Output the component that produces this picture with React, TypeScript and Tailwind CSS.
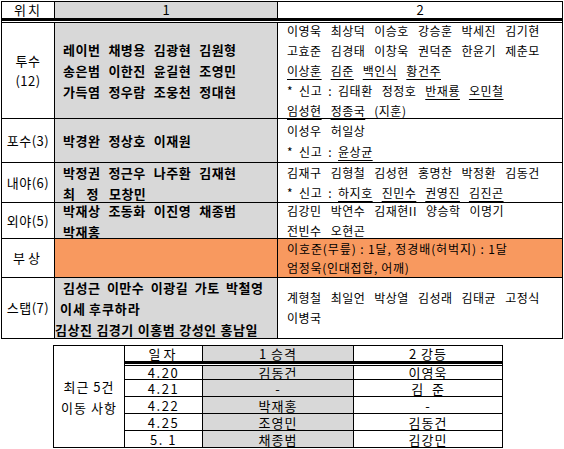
import React from "react";

const F = "font-['Noto_Sans_CJK_KR',sans-serif]";

type Wd = string | { t: string; u?: boolean; mr?: number };

function Row({ words, gap, cls = "", pl = 0 }: { words: Wd[]; gap: number; cls?: string; pl?: number }) {
  return (
    <div className={`flex whitespace-nowrap ${cls}`} style={{ paddingLeft: pl }}>
      {words.map((w, i) => {
        const o = typeof w === "string" ? { t: w } : w;
        const mr = i === words.length - 1 ? 0 : o.mr ?? gap;
        return (
          <span
            key={i}
            className={o.u ? "underline decoration-1 underline-offset-[3px]" : ""}
            style={{ marginRight: mr }}
          >
            {o.t}
          </span>
        );
      })}
    </div>
  );
}

const B2 = "text-[13px] font-bold leading-[21px] tracking-[0.5px]";
const T3 = "text-[12px] leading-[20px] tracking-[0.5px]";

function L2({ words, cls = "", gap = 8, pl = 0 }: { words: Wd[]; cls?: string; gap?: number; pl?: number }) {
  return <Row words={words} gap={gap} cls={`${B2} ${cls}`} pl={pl} />;
}
function L3({ words, cls = "", gap = 9 }: { words: Wd[]; cls?: string; gap?: number }) {
  return <Row words={words} gap={gap} cls={`${T3} ${cls}`} />;
}

const s = (str: string) => str.split(" ");
const u = (t: string): Wd => ({ t, u: true });
const SG: Wd[] = [{ t: "*", mr: 6 }, { t: "신고", mr: 6 }, { t: ":", mr: 6 }];

const c1 = "border-r border-b border-black flex flex-col items-center justify-center text-[13px] leading-[20px] tracking-[0.5px] whitespace-nowrap";
const c2 = "border-r border-b border-black bg-[#d8d8d8] flex flex-col justify-center pl-[8px]";
const c3 = "border-r border-b border-black flex flex-col justify-center pl-[9px]";

export default function App() {
  return (
    <div className={`w-[564px] h-[449px] bg-white text-black ${F}`}>
      <div className="pt-px pl-px">
        <div className="grid grid-cols-[53px_223px_285px] border-l border-t border-black w-[562px]">
          {/* header */}
          <div className="h-[19px] border-r border-b-[3px] border-black flex items-center justify-center text-[13px] leading-[14px] tracking-[2px]">위치</div>
          <div className="h-[19px] border-r border-b-[3px] border-black bg-[#d8d8d8] flex items-center justify-center text-[13px] leading-[14px]">1</div>
          <div className="h-[19px] border-r border-b-[3px] border-black flex items-center justify-center text-[13px] leading-[14px]">2</div>
          <div className="col-span-3 h-[2px] border-r border-b border-black bg-white" />

          {/* 투수 */}
          <div className={`${c1} h-[96px]`}>
            <div>투수</div>
            <div>(12)</div>
          </div>
          <div className={`${c2} h-[96px]`}>
            <L2 words={s("레이번 채병용 김광현 김원형")} cls="leading-[21.5px]" />
            <L2 words={s("송은범 이한진 윤길현 조영민")} cls="leading-[21.5px]" />
            <L2 words={s("가득염 정우람 조웅천 정대현")} cls="leading-[21.5px]" />
          </div>
          <div className="h-[96px] border-r border-b border-black flex flex-col justify-start pl-[9px]">
            <div className="-mt-[2px]">
              <L3 words={s("이영욱 최상덕 이승호 강승훈 박세진 김기현")} />
              <L3 words={s("고효준 김경태 이창욱 권덕준 한윤기 제춘모")} />
              <L3 words={[u("이상훈"), u("김준"), u("백인식"), u("황건주")]} />
              <L3 words={[...SG, "김태환", "정정호", u("반재룡"), u("오민철")]} />
              <L3 words={[u("임성현"), u("정종국"), "(지훈)"]} />
            </div>
          </div>

          {/* 포수 */}
          <div className={`${c1} h-[44px]`}>포수(3)</div>
          <div className={`${c2} h-[44px]`}>
            <L2 words={s("박경완 정상호 이재원")} />
          </div>
          <div className={`${c3} h-[44px]`}>
            <L3 words={s("이성우 허일상")} cls="leading-[21px]" />
            <L3 words={[...SG, u("윤상균")]} cls="leading-[21px]" />
          </div>

          {/* 내야 */}
          <div className={`${c1} h-[40px]`}>내야(6)</div>
          <div className={`${c2} h-[40px]`}>
            <L2 words={s("박정권 정근우 나주환 김재현")} cls="leading-[20px]" />
            <L2 words={[{ t: "최", mr: 11 }, { t: "정", mr: 10 }, u("모창민")]} cls="leading-[20px]" />
          </div>
          <div className={`${c3} h-[40px]`}>
            <L3 words={s("김재구 김형철 김성현 홍명찬 박정환 김동건")} cls="leading-[19px]" />
            <L3 words={[...SG, u("하지호"), u("진민수"), u("권영진"), u("김진곤")]} cls="leading-[19px]" />
          </div>

          {/* 외야 */}
          <div className={`${c1} h-[36px]`}>외야(5)</div>
          <div className={`${c2} h-[36px]`}>
            <L2 words={s("박재상 조동화 이진영 채종범")} cls="leading-[19px]" />
            <L2 words={s("박재홍")} cls="leading-[19px]" />
          </div>
          <div className={`${c3} h-[36px]`}>
            <L3 words={s("김강민 박연수 김재현II 양승학 이명기")} cls="leading-[19px]" />
            <L3 words={[u("전빈수"), u("오현곤")]} cls="leading-[19px]" />
          </div>

          {/* 부상 */}
          <div className={`${c1} h-[39px] tracking-[3px]`}>부상</div>
          <div className="h-[39px] border-r border-b border-black bg-[#f8995f]" />
          <div className={`${c3} h-[39px] bg-[#f8995f]`}>
            <div className="whitespace-nowrap text-[12px] leading-[19px] tracking-[0.9px]">이호준(무릎) : 1달, 정경배(허벅지) : 1달</div>
            <div className="whitespace-nowrap text-[12px] leading-[19px] tracking-[0.7px]">엄정욱(인대접합, 어깨)</div>
          </div>

          {/* 스탭 */}
          <div className={`${c1} h-[61px]`}>스탭(7)</div>
          <div className="h-[61px] border-r border-b border-black bg-[#d8d8d8] flex flex-col justify-center">
            <L2 words={s("김성근 이만수 이광길 가토 박철영")} gap={6.5} pl={8} cls="leading-[21px]" />
            <L2 words={s("이세 후쿠하라")} gap={3} pl={5} cls="leading-[21px] tracking-[1px]" />
            <L2 words={s("김상진 김경기 이홍범 강성인 홍남일")} gap={4} pl={0} cls="leading-[21px]" />
          </div>
          <div className={`${c3} h-[61px]`}>
            <L3 words={s("계형철 최일언 박상열 김성래 김태균 고정식")} cls="leading-[20px]" />
            <L3 words={s("이병국")} cls="leading-[20px]" />
          </div>
        </div>
      </div>

      {/* bottom table */}
      <div className="mt-[6px] ml-[53px]">
        <div className="grid grid-cols-[71px_78px_151px_149px] grid-rows-[18px_2px_14px_17px_17px_17px_17px] border-l border-t border-black w-[450px] text-[13px]">
          <div className="row-span-7 border-r border-b border-black flex flex-col items-center justify-center leading-[21px] tracking-[1px]">
            <div>최근 5건</div>
            <div>이동 사항</div>
          </div>
          <div className="border-r border-b-[3px] border-black flex items-center justify-center leading-[13px] tracking-[3px]">일자</div>
          <div className="border-r border-b-[3px] border-black bg-[#d8d8d8] flex items-center justify-center leading-[13px] tracking-[1px] whitespace-pre">1 승격</div>
          <div className="border-r border-b-[3px] border-black flex items-center justify-center leading-[13px] tracking-[1px] whitespace-pre">2 강등</div>
          <div className="col-span-3 border-r border-b border-black bg-white" />

          {[
            ["4.20", "김동건", "이영욱"],
            ["4.21", "-", "김  준"],
            ["4.22", "박재홍", "-"],
            ["4.25", "조영민", "김동건"],
            ["5. 1", "채종범", "김강민"],
          ].map((r, i) => (
            <React.Fragment key={i}>
              <div className="border-r border-b border-black flex items-center justify-center leading-[13px] tracking-[1.5px] whitespace-pre">{r[0]}</div>
              <div className="border-r border-b border-black bg-[#d8d8d8] flex items-center justify-center leading-[13px] tracking-[1px] whitespace-pre">{r[1]}</div>
              <div className="border-r border-b border-black flex items-center justify-center leading-[13px] tracking-[1px] whitespace-pre">{r[2]}</div>
            </React.Fragment>
          ))}
        </div>
      </div>
    </div>
  );
}
